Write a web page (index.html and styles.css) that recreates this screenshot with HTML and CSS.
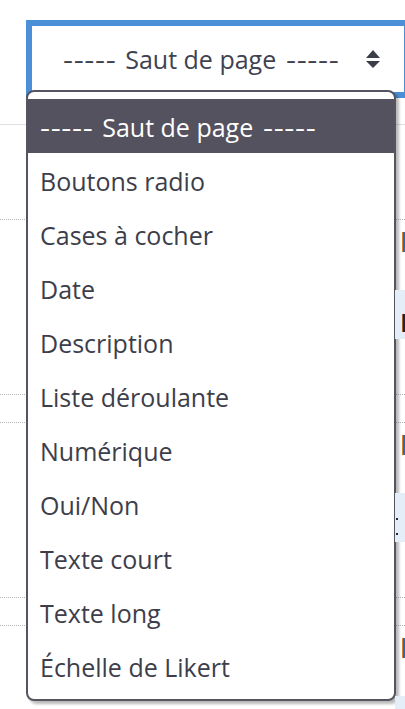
FILE: index.html
```html
<!DOCTYPE html>
<html lang="fr">
<head>
    <meta charset="UTF-8">
    <meta name="viewport" content="width=device-width, initial-scale=1.0">
    <title>Type de question</title>
    <link rel="stylesheet" href="styles.css">
</head>
<body>
    <div class="page">
        <div class="head-row">
            <div class="picker">
                <div class="picker-box">
                    <span class="picker-value"><span class="rule">-----</span> Saut de page <span class="rule">-----</span></span>
                    <svg class="picker-arrows" width="14" height="18" viewBox="0 0 14 18">
                        <path d="M7 0 L14 8 L0 8 Z" fill="#3b3d48"/>
                        <path d="M0 11 L14 11 L7 18 Z" fill="#3b3d48"/>
                    </svg>
                </div>
                <ul class="picker-menu">
                    <li class="is-active"><span class="rule">-----</span> Saut de page <span class="rule">-----</span></li>
                    <li>Boutons radio</li>
                    <li>Cases à cocher</li>
                    <li>Date</li>
                    <li>Description</li>
                    <li>Liste déroulante</li>
                    <li>Numérique</li>
                    <li>Oui/Non</li>
                    <li>Texte court</li>
                    <li>Texte long</li>
                    <li>Échelle de Likert</li>
                </ul>
            </div>
        </div>

        <div class="item">
            <div class="item-body">
                <div class="tag"></div>
                <div class="field"><span class="mark"></span></div>
            </div>
        </div>
        <div class="item">
            <div class="item-body">
                <div class="tag"></div>
                <div class="field"><span class="dot"></span><span class="dot"></span></div>
            </div>
        </div>
        <div class="item">
            <div class="item-body">
                <div class="tag"></div>
                <div class="field"></div>
            </div>
        </div>
    </div>
</body>
</html>
```

FILE: styles.css
```css
body {
    margin: 0;
    background: #fff;
    font-family: 'Open Sans', 'Noto Sans', sans-serif;
    color: #3d3e4a;
    overflow: hidden;
}
.page {
    width: 405px;
    height: 709px;
    overflow: hidden;
}
.head-row {
    height: 125px;
    border-bottom: 1px solid #dee2e6;
    padding: 20px 0 0 26px;
    box-sizing: border-box;
    margin-bottom: 94px;
}
.picker {
    position: relative;
    width: 384px;
}
.picker-box {
    height: 78px;
    border: 6px solid #4a8fd7;
    box-sizing: border-box;
    display: flex;
    align-items: center;
    justify-content: space-between;
    padding: 0 24px 0 31px;
    background: #fff;
}
.picker-value {
    font-size: 25px;
    color: #3f4250;
    white-space: nowrap;
}
/* the dashes are wider in the original font */
.rule {
    display: inline-block;
    letter-spacing: 0.5px;
    transform: scaleX(1.25);
    transform-origin: left center;
    margin-right: 13px;
}
.rule:last-child {
    margin-left: 3px;
}
.picker-arrows {
    flex-shrink: 0;
}
.picker-menu {
    position: absolute;
    top: 70px;
    left: 0;
    width: 370px;
    margin: 0;
    padding: 7px 0 6px;
    list-style: none;
    background: #fff;
    border: 2px solid #55545f;
    border-radius: 8px;
    box-sizing: border-box;
    box-shadow: 3px 3px 3px rgba(0, 0, 0, 0.28);
}
.picker-menu li {
    height: 54px;
    line-height: 56px;
    padding-left: 12px;
    font-size: 25px;
    white-space: nowrap;
}
.picker-menu li.is-active {
    background: #53525e;
    color: #fff;
}
.item {
    height: 176px;
    border-top: 1px dotted #b4b4b4;
    border-bottom: 1px dotted #b4b4b4;
    box-sizing: border-box;
    margin-bottom: 27px;
}
.item-body {
    margin-left: 395px;
    padding-top: 12px;
}
.tag {
    margin-left: 7px;
    width: 3px;
    height: 20px;
    border-left: 1px solid #d9822b;
    background: #1f6cc4;
}
.field {
    position: relative;
    margin-top: 38px;
    height: 49px;
    background: #e3eef9;
}
.mark {
    position: absolute;
    left: 7px;
    top: 24px;
    width: 3px;
    height: 18px;
    border-left: 1px solid #a0622a;
    background: #1d2145;
}
.dot {
    position: absolute;
    left: 1px;
    width: 2px;
    height: 2px;
    background: #1d2a45;
}
.dot:first-child {
    top: 25px;
}
.dot:last-child {
    top: 40px;
}
```
